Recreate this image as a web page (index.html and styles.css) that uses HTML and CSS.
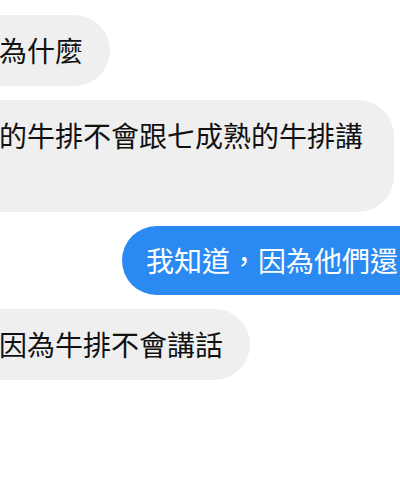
FILE: index.html
```html
<!DOCTYPE html>
<html lang="zh-Hant">
<head>
<meta charset="UTF-8">
<meta name="viewport" content="width=device-width, initial-scale=1.0">
<title>Chat</title>
<link rel="stylesheet" href="styles.css">
</head>
<body>
<div class="chat">
  <p class="bubble in">為什麼</p>
  <p class="bubble in wide">的牛排不會跟七成熟的牛排講<br>&nbsp;</p>
  <p class="bubble out">我知道，因為他們還</p>
  <p class="bubble in">因為牛排不會講話</p>
</div>
</body>
</html>
```

FILE: styles.css
```css
body { margin: 0; background: #fff; overflow: hidden; font-family: "Noto Sans CJK TC", "Noto Sans CJK SC", sans-serif; }
.chat { width: 400px; height: 480px; display: flex; flex-direction: column; align-items: flex-start; gap: 14px; padding-top: 15px; box-sizing: border-box; }
.bubble { margin: 0; font-size: 28px; line-height: 41px; padding: 15px 27px; border-radius: 36px; white-space: nowrap; }
.in { background: #efefef; color: #111; margin-left: -61px; padding-left: 60px; }
.wide { padding-right: 31px; }
.out { background: #2a8af1; color: #fff; margin-left: 122px; padding: 14px 80px 14px 24px; }
```
